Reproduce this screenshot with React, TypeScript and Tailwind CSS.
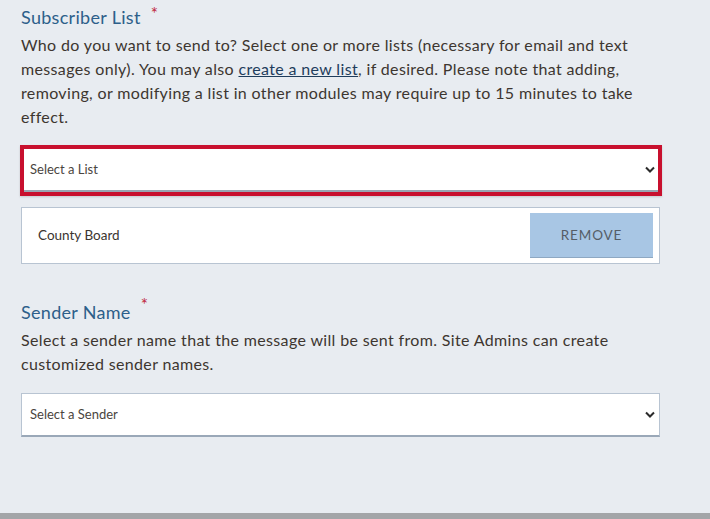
import React from "react";

function Chevron() {
  return (
    <svg width="10" height="7" viewBox="0 0 10 7" className="shrink-0">
      <path d="M1 1.5 L5 5.5 L9 1.5" fill="none" stroke="#2b2b2b" strokeWidth="2" />
    </svg>
  );
}

function FieldLabel({ text, starX }: { text: string; starX: string }) {
  return (
    <div className="flex items-start h-[28px]">
      <span className="text-[18px] text-[#2d5f8a] tracking-[0.3px] leading-[28px]">{text}</span>
      <span className={`text-[17px] text-[#c0283c] leading-none ${starX}`}>*</span>
    </div>
  );
}

export default function App() {
  return (
    <div
      className="w-[710px] h-[519px] bg-[#e8ecf1] flex flex-col overflow-hidden"
      style={{ fontFamily: "Lato, 'Open Sans', sans-serif" }}
    >
      <div className="flex-1 pl-[21px] pr-[50px] pt-[3px]">
        {/* Subscriber list */}
        <FieldLabel text="Subscriber List" starX="ml-[10px] mt-[2px]" />
        <p className="mt-[2px] text-[16px] leading-[24px] text-[#3d3630] tracking-[0.35px]">
          Who do you want to send to? Select one or more lists (necessary for email and text
          <br />
          messages only). You may also{" "}
          <a href="#" className="underline text-[#1f3d5c]">
            create a new list
          </a>
          , if desired. Please note that adding,
          <br />
          removing, or modifying a list in other modules may require up to 15 minutes to take
          <br />
          effect.
        </p>

        <div className="mt-[16px] -ml-[1px] w-[642px] h-[51px] border-[4px] border-[#c8102e] bg-white shadow-[0_1px_2px_rgba(0,0,0,0.15)]">
          <div className="h-full flex items-center justify-between pl-[6px] pr-[3px] border-b-2 border-[#9aa5b2]">
            <span className="text-[13px] text-[#4a4540]">Select a List</span>
            <Chevron />
          </div>
        </div>

        <div className="mt-[11px] w-[639px] h-[57px] bg-white border border-[#b8c4d2] flex items-center justify-between pl-[16px] pr-[6px]">
          <span className="text-[13.5px] text-[#3b3530]">County Board</span>
          <button className="w-[123px] h-[45px] bg-[#a8c6e4] border-b border-[#8ea8c2] text-[13.5px] tracking-[0.9px] text-[#555d66]">
            REMOVE
          </button>
        </div>

        {/* Sender name */}
        <div className="mt-[34px]">
          <FieldLabel text="Sender Name" starX="ml-[10px] mt-[-2px]" />
        </div>
        <p className="mt-[2px] text-[16px] leading-[24px] text-[#3d3630] tracking-[0.35px]">
          Select a sender name that the message will be sent from. Site Admins can create
          <br />
          customized sender names.
        </p>

        <div className="mt-[17px] w-[639px] h-[44px] bg-white border border-[#b8c4d2] border-b-2 border-b-[#9aa8b8] flex items-center justify-between pl-[8px] pr-[4px]">
          <span className="text-[13px] text-[#4a4540]">Select a Sender</span>
          <Chevron />
        </div>
      </div>
      <div className="h-[6px] bg-[#a3a5a8]" />
    </div>
  );
}
